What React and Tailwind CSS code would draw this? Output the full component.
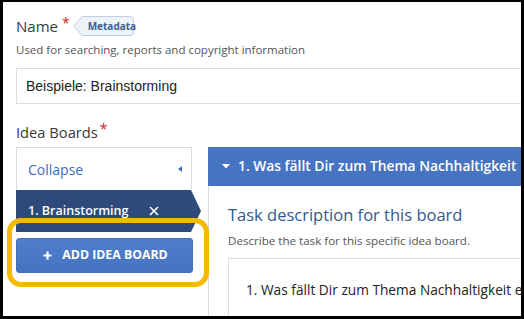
export default function App() {
  return (
    <div className="w-[524px] h-[319px] bg-black pt-[2px] pl-[3px] pr-[3px] pb-[3px]" style={{ fontFamily: '"Open Sans", sans-serif' }}>
      <div className="relative h-full w-full overflow-hidden bg-white">
        <div className="pl-[13px] pt-[14px]">
          {/* Name row */}
          <div className="flex h-[20px] items-center">
            <span className="text-[15px] leading-[20px] text-[#3a3a3a]">Name</span>
            <span className="ml-[4px] self-start text-[14px] leading-[14px] text-[#d42020]">*</span>
            <div className="relative ml-[3px] flex h-[20px] w-[61px] shrink-0 items-center">
              <svg className="absolute inset-0" width="61" height="20" viewBox="0 0 61 20">
                <path d="M0.8 10 L9 0.5 H57 Q60.5 0.5 60.5 4 V16 Q60.5 19.5 57 19.5 H9 Z" fill="#eef3f9" stroke="#c3cfdd" strokeWidth="1" />
              </svg>
              <span className="relative pl-[15px] text-[10px] font-bold leading-[20px] text-[#3b5f8f]">Metadata</span>
            </div>
          </div>
          <p className="mt-[6px] text-[11.5px] leading-[16px] text-[#555]">
            Used for searching, reports and copyright information
          </p>
          <div className="mt-[10px] flex h-[36px] w-[520px] items-center border border-[#dcdcdc] pl-[9px] text-[14px] text-[#222]" style={{ fontFamily: '"Liberation Sans", Arial, sans-serif' }}>
            Beispiele: Brainstorming
          </div>
          <div className="mt-[18px] flex h-[20px] items-center">
            <span className="text-[14.7px] leading-[20px] text-[#3a3a3a]">Idea Boards</span>
            <span className="ml-[2px] self-start text-[14px] leading-[14px] text-[#d42020]">*</span>
          </div>
          <div className="mt-[5px] flex">
            {/* left column */}
            <div className="w-[177px] shrink-0">
              <div className="flex h-[43px] w-[176px] items-center justify-between border border-b-0 border-[#dcdcdc] pl-[11px] pr-[9px]">
                <span className="text-[14px] text-[#3d6cbf]">Collapse</span>
                <svg className="shrink-0" width="4" height="6" viewBox="0 0 4 6"><path d="M4 0 L0 3 L4 6 Z" fill="#3d6cbf" /></svg>
              </div>
              <div className="flex h-[42px] w-[185px] items-center bg-[#2d4a7b] pl-[12px] [clip-path:polygon(0_0,175px_0,100%_50%,175px_100%,0_100%)]">
                <span className="text-[12.5px] font-semibold text-white">1. Brainstorming</span>
                <svg className="ml-[21px] shrink-0" width="10" height="10" viewBox="0 0 10 10"><path d="M1 1 L9 9 M9 1 L1 9" stroke="white" strokeWidth="1.6" /></svg>
              </div>
              <div className="mt-[6px] flex h-[35px] w-[177px] items-center justify-center gap-[10px] rounded-[3px] border border-[#4170bb] bg-gradient-to-b from-[#4f7fca] to-[#4573c0] pl-[2px] text-[12.3px] font-bold text-white">
                <svg className="shrink-0" width="9" height="9" viewBox="0 0 9 9"><path d="M4.5 0.5 V8.5 M0.5 4.5 H8.5" stroke="white" strokeWidth="2.2" /></svg>
                <span>ADD IDEA BOARD</span>
              </div>
            </div>
            {/* right column */}
            <div className="ml-[15px] w-[320px] shrink-0">
              <div className="flex h-[39px] items-center bg-[#4673c2] pl-[14px]">
                <svg className="shrink-0" width="8" height="5" viewBox="0 0 8 5"><path d="M0 0 H8 L4 4.5 Z" fill="white" /></svg>
                <span className="ml-[8px] whitespace-nowrap text-[13.8px] font-semibold text-white">1. Was fällt Dir zum Thema Nachhaltigkeit</span>
              </div>
              <div className="h-[200px] border-l border-[#dcdcdc] pl-[19px] pt-[17px]">
                <div className="whitespace-nowrap text-[16.5px] font-medium leading-[24px] text-[#34598d]">Task description for this board</div>
                <div className="mt-[6px] whitespace-nowrap text-[11.6px] leading-[16px] text-[#555]">Describe the task for this specific idea board.</div>
                <div className="mt-[9px] h-[80px] border border-[#dcdcdc] pl-[17px] pt-[21px]">
                  <div className="whitespace-nowrap text-[13.7px] leading-[20px] text-[#222]">1. Was fällt Dir zum Thema Nachhaltigkeit einfallen?</div>
                </div>
              </div>
            </div>
          </div>
        </div>
        {/* highlight annotation */}
        <div className="absolute left-[4px] top-[216px] h-[69px] w-[202px] rounded-[14px] border-[5px] border-[#f5b900]" />
      </div>
    </div>
  );
}
